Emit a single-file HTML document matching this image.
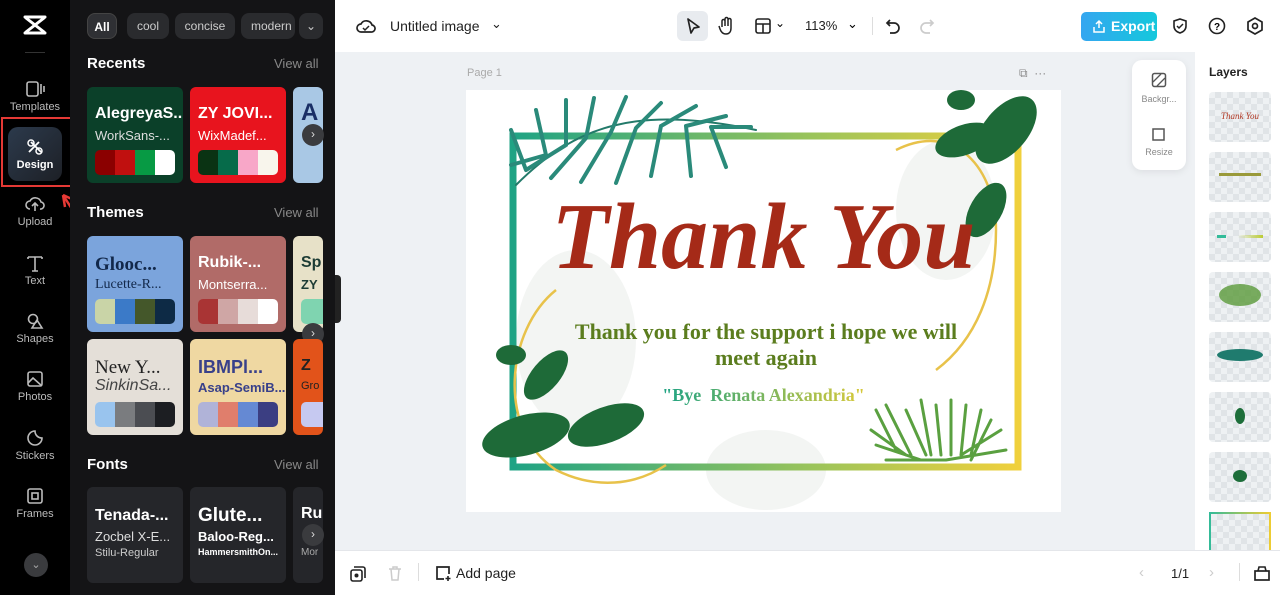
<!DOCTYPE html><html><head><meta charset="utf-8"><style>
*{box-sizing:border-box;margin:0;padding:0}
body{width:1280px;height:595px;overflow:hidden;font-family:"Liberation Sans",sans-serif;background:#eef1f4;position:relative}
.abs{position:absolute}
#rail{left:0;top:0;width:70px;height:595px;background:#000}
.ri{position:absolute;left:0;width:70px;text-align:center;color:#bbb;font-size:11px}
.ri svg{display:block;margin:0 auto 3px}
#panel{left:70px;top:0;width:265px;height:595px;background:#141416;color:#fff;overflow:hidden}
.chip{position:absolute;top:13px;height:26px;border-radius:8px;background:#2a2b2e;color:#ccc;font-size:12px;line-height:26px;text-align:center;white-space:nowrap}
.h{position:absolute;left:17px;font-weight:bold;font-size:15px}
.va{position:absolute;left:204px;font-size:13px;color:#888}
.card{position:absolute;width:96px;height:96px;border-radius:6px;overflow:hidden}
.card .t1{position:absolute;left:8px;top:18px;font-weight:bold;font-size:16px;white-space:nowrap}
.card .t2{position:absolute;left:8px;top:41px;font-size:13px;white-space:nowrap}
.pal{position:absolute;left:8px;top:63px;width:80px;height:25px;border-radius:5px;overflow:hidden;display:flex}
.pal i{flex:1}
.arr{position:absolute;left:232px;width:22px;height:22px;border-radius:50%;background:#3a3b3e;color:#ddd;font-size:12px;text-align:center;line-height:21px}
#top{left:335px;top:0;width:945px;height:52px;background:#fff}
#bot{left:335px;top:550px;width:945px;height:45px;background:#fff;border-top:1px solid #e4e6ea}
#layers{left:1195px;top:52px;width:85px;height:498px;background:#fff}
.lay{position:absolute;left:14px;width:62px;height:50px;border-radius:4px;background-color:#eef1f3;background-image:linear-gradient(45deg,#e0e4e7 25%,transparent 25%,transparent 75%,#e0e4e7 75%),linear-gradient(45deg,#e0e4e7 25%,transparent 25%,transparent 75%,#e0e4e7 75%);background-size:12px 12px;background-position:0 0,6px 6px}
</style></head><body>
<div id="rail" class="abs">
 <svg class="abs" style="left:22px;top:14px" width="26" height="22" viewBox="0 0 26 22"><path d="M3 3h20M3 19h20M4 4l18 14M22 4L4 18" fill="none" stroke="#fff" stroke-width="3" stroke-linejoin="round" stroke-linecap="round"/></svg>
 <div class="abs" style="left:25px;top:52px;width:20px;height:1px;background:#333"></div>
 <div class="ri" style="top:80px"><svg width="20" height="18"><rect x="2" y="2" width="11" height="14" rx="2" fill="none" stroke="#bbb" stroke-width="1.6"/><path d="M16 4v10M19 6v6" stroke="#bbb" stroke-width="1.6"/></svg>Templates</div>
 <div class="abs" style="left:1px;top:117px;width:72px;height:70px;border:2px solid #e53935"></div>
 <div class="abs" style="left:8px;top:127px;width:54px;height:54px;border-radius:10px;background:linear-gradient(135deg,#2c3a4c,#1d2026)"></div>
 <div class="ri" style="top:138px;color:#fff;font-weight:bold"><svg width="20" height="18"><path d="M6 4l10 10M14 4L4 14" stroke="#fff" stroke-width="1.8" fill="none"/><circle cx="6" cy="5" r="3" fill="none" stroke="#fff" stroke-width="1.5"/><circle cx="14" cy="13" r="3" fill="none" stroke="#fff" stroke-width="1.5"/></svg>Design</div>
 <svg class="abs" style="left:58px;top:190px" width="34" height="46"><path d="M30 44L5 5M5 5l2 12M5 5l11 5" stroke="#e53935" stroke-width="2.5" fill="none"/></svg>
 <div class="ri" style="top:195px"><svg width="20" height="18"><path d="M5 14a4 4 0 010-8 6 6 0 0111 1 3.5 3.5 0 01-1 7M10 16V8M7 11l3-3 3 3" fill="none" stroke="#bbb" stroke-width="1.6"/></svg>Upload</div>
 <div class="ri" style="top:254px"><svg width="20" height="18"><path d="M3 3h14M10 3v14M3 3v2M17 3v2M7 17h6" stroke="#bbb" stroke-width="1.6" fill="none"/></svg>Text</div>
 <div class="ri" style="top:312px"><svg width="20" height="18"><circle cx="8" cy="7" r="4.5" fill="none" stroke="#bbb" stroke-width="1.6"/><path d="M12 8l5 8H7z" fill="none" stroke="#bbb" stroke-width="1.6"/></svg>Shapes</div>
 <div class="ri" style="top:370px"><svg width="20" height="18"><rect x="3" y="2" width="14" height="14" rx="2" fill="none" stroke="#bbb" stroke-width="1.6"/><path d="M3 13l5-5 9 8" stroke="#bbb" stroke-width="1.6" fill="none"/></svg>Photos</div>
 <div class="ri" style="top:429px"><svg width="20" height="18"><path d="M10 2a7 7 0 107 7c-4 0-7-3-7-7z" fill="none" stroke="#bbb" stroke-width="1.6"/></svg>Stickers</div>
 <div class="ri" style="top:487px"><svg width="20" height="18"><rect x="3" y="2" width="14" height="14" rx="2" fill="none" stroke="#bbb" stroke-width="1.6"/><rect x="7" y="6" width="6" height="6" fill="none" stroke="#bbb" stroke-width="1.6"/></svg>Frames</div>
 <div class="abs" style="left:24px;top:553px;width:24px;height:24px;border-radius:50%;background:#3a3b3e;color:#aaa;font-size:11px;text-align:center;line-height:24px">⌄</div>
</div>
<div id="panel" class="abs">
 <div class="chip" style="left:17px;width:30px;background:#2f3034;color:#fff;border:1px solid #444;font-weight:bold">All</div>
 <div class="chip" style="left:57px;width:42px">cool</div>
 <div class="chip" style="left:105px;width:60px">concise</div>
 <div class="chip" style="left:171px;width:54px;overflow:hidden;text-align:left;padding-left:10px">modern</div>
 <div class="chip" style="left:229px;width:24px">⌄</div>
 <div class="h" style="top:55px">Recents</div><div class="va" style="top:56px">View all</div>
 <div class="card" style="left:17px;top:87px;background:#0b4029"><div class="t1">AlegreyaS...</div><div class="t2" style="color:#ddd">WorkSans-...</div><div class="pal"><i style="background:#8b0000"></i><i style="background:#c0100f"></i><i style="background:#079a44"></i><i style="background:#fff"></i></div></div>
 <div class="card" style="left:120px;top:87px;background:#e8141e"><div class="t1">ZY JOVI...</div><div class="t2">WixMadef...</div><div class="pal"><i style="background:#0a3313"></i><i style="background:#066b4a"></i><i style="background:#f8a7c8"></i><i style="background:#f8f5ec"></i></div></div>
 <div class="card" style="left:223px;top:87px;background:#a9c8e5;width:30px"><div class="t1" style="color:#1a2f66;font-size:24px;top:12px">A</div></div>
 <div class="arr" style="top:124px">›</div>
 <div class="h" style="top:204px">Themes</div><div class="va" style="top:205px">View all</div>
 <div class="card" style="left:17px;top:236px;background:#7ba4dc"><div class="t1" style="color:#12284a;font-family:'Liberation Serif',serif;font-size:19px">Glooc...</div><div class="t2" style="color:#12284a;font-family:'Liberation Serif',serif;font-size:14px">Lucette-R...</div><div class="pal"><i style="background:#c9d4a7"></i><i style="background:#3b7ac8"></i><i style="background:#44572a"></i><i style="background:#0d2a45"></i></div></div>
 <div class="card" style="left:120px;top:236px;background:#b16b68"><div class="t1" style="color:#fff">Rubik-...</div><div class="t2" style="color:#fff">Montserra...</div><div class="pal"><i style="background:#a93434"></i><i style="background:#cfa6a5"></i><i style="background:#e7dcd9"></i><i style="background:#fff"></i></div></div>
 <div class="card" style="left:223px;top:236px;background:#e7e1c8;width:30px"><div class="t1" style="color:#1c3b34">Sp</div><div class="t2" style="color:#1c3b34;font-weight:bold">ZY</div><div class="pal"><i style="background:#7fd4b0"></i></div></div>
 <div class="arr" style="top:323px">›</div>
 <div class="card" style="left:17px;top:339px;background:#e4dfd8"><div class="t1" style="color:#222;font-family:'Liberation Serif',serif;font-weight:normal;font-size:19px">New Y...</div><div class="t2" style="color:#444;font-style:italic;font-size:16px;top:38px">SinkinSa...</div><div class="pal"><i style="background:#99c4ee"></i><i style="background:#7a7c7f"></i><i style="background:#4b4d52"></i><i style="background:#1c1e22"></i></div></div>
 <div class="card" style="left:120px;top:339px;background:#efd8a2"><div class="t1" style="color:#38408a;font-size:18px">IBMPl...</div><div class="t2" style="color:#38408a;font-weight:bold">Asap-SemiB...</div><div class="pal"><i style="background:#b0b3d8"></i><i style="background:#e07e6c"></i><i style="background:#6589d3"></i><i style="background:#3b3e82"></i></div></div>
 <div class="card" style="left:223px;top:339px;background:#e2531a;width:30px"><div class="t1" style="color:#222">Z</div><div class="t2" style="color:#222;font-size:11px">Gro</div><div class="pal"><i style="background:#c6c9f1"></i></div></div>
 <div class="h" style="top:456px">Fonts</div><div class="va" style="top:457px">View all</div>
 <div class="card" style="left:17px;top:487px;background:#25262a"><div class="t1" style="top:20px;font-size:16px">Tenada-...</div><div class="t2" style="top:42px;color:#ddd;font-size:13px">Zocbel X-E...</div><div class="t2" style="top:60px;font-size:11px;color:#ccc">Stilu-Regular</div></div>
 <div class="card" style="left:120px;top:487px;background:#25262a"><div class="t1" style="top:18px;font-size:19px">Glute...</div><div class="t2" style="top:42px;font-weight:bold;font-size:13px">Baloo-Reg...</div><div class="t2" style="top:60px;font-size:9px;font-weight:bold">HammersmithOn...</div></div>
 <div class="card" style="left:223px;top:487px;background:#25262a;width:30px"><div class="t1" style="top:18px">Ru</div><div class="t2" style="top:60px;font-size:10px;color:#aaa">Mor</div></div>
 <div class="arr" style="top:524px">›</div>
</div>
<div class="abs" style="left:335px;top:275px;width:6px;height:48px;background:#222;border-radius:0 4px 4px 0"></div>
<div id="top" class="abs">
 <svg class="abs" style="left:21px;top:17px" width="20" height="18"><path d="M5 15a4 4 0 010-8 6 6 0 0111 1 3.5 3.5 0 01-1 7z" fill="none" stroke="#222" stroke-width="1.7"/><path d="M7 11l2 2 4-4" stroke="#222" stroke-width="1.5" fill="none"/></svg>
 <div class="abs" style="left:55px;top:18px;font-size:14px;color:#222">Untitled image</div>
 <div class="abs" style="left:156px;top:16px;font-size:13px;color:#222">⌄</div>
 <div class="abs" style="left:342px;top:11px;width:31px;height:30px;border-radius:6px;background:#e8ebef"></div>
 <svg class="abs" style="left:349px;top:17px" width="18" height="18"><path d="M4 2l11 8-5 1-3 5z" fill="none" stroke="#222" stroke-width="1.7" stroke-linejoin="round"/></svg>
 <svg class="abs" style="left:382px;top:16px" width="18" height="20"><path d="M5 11V5a1.5 1.5 0 013 0v5V3a1.5 1.5 0 013 0v7V4a1.5 1.5 0 013 0v8c0 4-2 6-5 6s-5-2-6-5l-1-3" fill="none" stroke="#222" stroke-width="1.5"/></svg>
 <svg class="abs" style="left:419px;top:17px" width="18" height="18"><rect x="2" y="2" width="14" height="14" rx="2" fill="none" stroke="#222" stroke-width="1.6"/><path d="M2 7h14M9 7v9" stroke="#222" stroke-width="1.6"/></svg>
 <div class="abs" style="left:440px;top:16px;font-size:12px">⌄</div>
 <div class="abs" style="left:470px;top:18px;font-size:13px;color:#222">113%</div>
 <div class="abs" style="left:512px;top:16px;font-size:13px">⌄</div>
 <div class="abs" style="left:537px;top:17px;width:1px;height:18px;background:#ddd"></div>
 <svg class="abs" style="left:549px;top:17px" width="18" height="18"><path d="M6 3L3 6l3 3M3 6h7a5 5 0 010 10H6" fill="none" stroke="#222" stroke-width="1.7"/></svg>
 <svg class="abs" style="left:583px;top:17px" width="18" height="18"><path d="M12 3l3 3-3 3M15 6H8a5 5 0 000 10h4" fill="none" stroke="#ccc" stroke-width="1.7"/></svg>
 <div class="abs" style="left:746px;top:12px;width:76px;height:29px;border-radius:5px;background:linear-gradient(90deg,#35a6f0,#14c8dc);color:#fff;font-size:14px;font-weight:bold;line-height:29px;padding-left:30px">Export</div>
 <svg class="abs" style="left:757px;top:19px" width="14" height="15"><path d="M7 9V2M4 5l3-3 3 3M2 8v5h10V8" fill="none" stroke="#fff" stroke-width="1.5"/></svg>
 <svg class="abs" style="left:836px;top:17px" width="18" height="18"><path d="M9 2l6 2v5c0 4-3 6-6 7-3-1-6-3-6-7V4z" fill="none" stroke="#222" stroke-width="1.6"/><path d="M6 9l2 2 4-4" stroke="#222" stroke-width="1.5" fill="none"/></svg>
 <svg class="abs" style="left:873px;top:17px" width="18" height="18"><circle cx="9" cy="9" r="7.5" fill="none" stroke="#222" stroke-width="1.6"/><text x="9" y="13" text-anchor="middle" font-size="10" font-weight="bold" font-family="Liberation Sans">?</text></svg>
 <svg class="abs" style="left:911px;top:17px" width="18" height="18"><path d="M9 1l7 4v8l-7 4-7-4V5z" fill="none" stroke="#222" stroke-width="1.7"/><circle cx="9" cy="9" r="2.5" fill="none" stroke="#222" stroke-width="1.7"/></svg>
</div>
<div class="abs" style="left:467px;top:67px;font-size:11px;color:#aaa">Page 1</div>
<div class="abs" style="left:1019px;top:66px;font-size:12px;color:#888">⧉ &nbsp;···</div>
<div class="abs" style="left:1132px;top:60px;width:54px;height:110px;background:#fff;border-radius:10px;box-shadow:0 2px 8px rgba(0,0,0,.08)"></div>
<svg class="abs" style="left:1151px;top:72px" width="16" height="16"><rect x="1.5" y="1.5" width="13" height="13" rx="2" fill="none" stroke="#555" stroke-width="1.5"/><path d="M2 10l8-8M6 14l8-8" stroke="#555" stroke-width="1.3"/></svg>
<div class="abs" style="left:1132px;top:94px;width:54px;text-align:center;font-size:9px;color:#888">Backgr...</div>
<svg class="abs" style="left:1151px;top:126px" width="16" height="16"><rect x="2" y="3" width="11" height="11" fill="none" stroke="#555" stroke-width="1.5"/></svg>
<div class="abs" style="left:1132px;top:147px;width:54px;text-align:center;font-size:9px;color:#888">Resize</div>
<div id="layers" class="abs">
 <div class="abs" style="left:14px;top:13px;font-size:12px;font-weight:bold;color:#222">Layers</div>
 <div class="lay" style="top:40px"><div style="color:#b23a26;font-family:'Liberation Serif',serif;font-style:italic;font-size:9px;text-align:center;margin-top:19px">Thank You</div></div>
 <div class="lay" style="top:100px"><div style="margin:21px 10px 0;height:3px;background:#9a9a3a"></div></div>
 <div class="lay" style="top:160px"><div style="margin:23px 8px 0;height:3px;background:linear-gradient(90deg,#3b9 20%,transparent 20%,transparent 45%,#bc3)"></div></div>
 <div class="lay" style="top:220px"><div style="margin:12px 10px;height:22px;border-radius:50%;background:#5a9a3a;opacity:.8"></div></div>
 <div class="lay" style="top:280px"><div style="margin:17px 8px;height:12px;border-radius:50%;background:#1f7b6e"></div></div>
 <div class="lay" style="top:340px"><div style="margin:16px 26px;height:16px;border-radius:50%;background:#1d6e3a"></div></div>
 <div class="lay" style="top:400px"><div style="margin:18px 24px;height:12px;border-radius:50%;background:#1d6e3a"></div></div>
 <div class="lay" style="top:460px;border:2px solid;border-image:linear-gradient(90deg,#3b9,#ec3) 1"></div>
</div>
<div class="abs" style="left:466px;top:90px;width:595px;height:422px;background:#fff;overflow:hidden">
 <svg width="595" height="422" style="position:absolute;left:0;top:0">
  <defs><linearGradient id="g" x1="0" x2="1"><stop offset="0" stop-color="#1fa384"/><stop offset=".6" stop-color="#9cc45a"/><stop offset="1" stop-color="#f0d03c"/></linearGradient></defs>
  <g fill="#f3f5f3"><ellipse cx="110" cy="250" rx="60" ry="90"/><ellipse cx="480" cy="120" rx="50" ry="70"/><ellipse cx="300" cy="380" rx="60" ry="40"/></g>
  <rect x="47" y="46" width="505" height="331" fill="none" stroke="url(#g)" stroke-width="7"/>
  <path d="M430 60c60-30 100 20 100 80s-20 110-60 140" fill="none" stroke="#e8c24a" stroke-width="2.5"/>
  <path d="M90 200c-50 40-60 140 0 180 40 20 80 15 110-5" fill="none" stroke="#e8c24a" stroke-width="2.5"/>
  <g fill="#1e6a38"><ellipse cx="540" cy="40" rx="40" ry="22" transform="rotate(-50 540 40)"/><ellipse cx="498" cy="50" rx="30" ry="15" transform="rotate(-20 498 50)"/><ellipse cx="520" cy="120" rx="30" ry="16" transform="rotate(-60 520 120)"/><ellipse cx="495" cy="10" rx="14" ry="10"/>
  <ellipse cx="60" cy="345" rx="45" ry="20" transform="rotate(-15 60 345)"/><ellipse cx="140" cy="335" rx="40" ry="18" transform="rotate(-20 140 335)"/><ellipse cx="80" cy="285" rx="30" ry="14" transform="rotate(-50 80 285)"/><ellipse cx="45" cy="265" rx="15" ry="10"/></g>
  <g stroke="#2a8a7a" stroke-width="4" stroke-linecap="round">
   <path d="M50 95c60-60 120-80 240-55" fill="none" stroke="#237a6a" stroke-width="2"/>
   <path d="M60 80l-15-40M80 65l-10-45M100 55l0-45M120 48l8-40M145 42l15-35M170 38l25-25M195 36l35-20M220 36l40-10M245 37l40 0M80 65l-35 10M100 55l-40 25M120 48l-35 40M145 42l-30 50M170 38l-20 55M195 36l-10 50M220 36l5 50M245 37l15 40"/>
  </g>
  <g stroke="#5aa040" stroke-width="3" stroke-linecap="round">
   <path d="M410 320l20 40M420 315l25 50M440 320l20 45M455 310l10 55M470 315l5 50M485 310l0 55M500 315l-5 50M515 320l-10 45M525 330l-20 40M405 340l35 25M410 355l45 15M420 370l60 0M535 340l-40 25M540 360l-60 10"/>
  </g>
 </svg>
 <div style="position:absolute;left:0;top:100px;width:595px;text-align:center;font-family:'Liberation Serif',serif;font-style:italic;font-weight:bold;font-size:94px;color:#a52a18;line-height:94px">Thank You</div>
 <div style="position:absolute;left:95px;top:229px;width:410px;text-align:center;font-family:'Liberation Serif',serif;font-weight:bold;font-size:22px;line-height:26px;color:#5b7d1e">Thank you for the support i hope we will meet again</div>
 <div style="position:absolute;left:0;top:295px;width:595px;text-align:center;font-family:'Liberation Serif',serif;font-weight:bold;font-size:18px;color:#2aa56c"><span style="background:linear-gradient(90deg,#1fa384,#d8c93a);-webkit-background-clip:text;color:transparent">"Bye &nbsp;Renata Alexandria"</span></div>
</div>
<div id="bot" class="abs">
 <svg class="abs" style="left:14px;top:14px" width="18" height="18"><rect x="2" y="5" width="11" height="11" rx="2" fill="none" stroke="#222" stroke-width="1.6"/><path d="M5 2h9a2 2 0 012 2v9" fill="none" stroke="#222" stroke-width="1.6"/><circle cx="7.5" cy="10.5" r="2" fill="#222"/></svg>
 <svg class="abs" style="left:52px;top:14px" width="16" height="18"><path d="M2 4h12M4 4l1 11h6l1-11M6 4V2h4v2" fill="none" stroke="#ccc" stroke-width="1.5"/></svg>
 <div class="abs" style="left:83px;top:12px;width:1px;height:18px;background:#ddd"></div>
 <svg class="abs" style="left:99px;top:13px" width="18" height="18"><path d="M10 15H3V3h12v7" fill="none" stroke="#222" stroke-width="1.7"/><path d="M14 12v5M11.5 14.5h5" stroke="#222" stroke-width="1.6"/></svg>
 <div class="abs" style="left:121px;top:14px;font-size:14px;color:#222">Add page</div>
 <div class="abs" style="left:804px;top:13px;font-size:15px;color:#ccc">‹</div>
 <div class="abs" style="left:836px;top:15px;font-size:13px;color:#222">1/1</div>
 <div class="abs" style="left:874px;top:13px;font-size:15px;color:#ccc">›</div>
 <div class="abs" style="left:904px;top:12px;width:1px;height:18px;background:#ddd"></div>
 <svg class="abs" style="left:918px;top:13px" width="18" height="18"><rect x="2" y="7" width="14" height="9" fill="none" stroke="#222" stroke-width="1.7"/><path d="M5 7l1-4h6l1 4" fill="none" stroke="#222" stroke-width="1.6"/></svg>
</div>
</body></html>
